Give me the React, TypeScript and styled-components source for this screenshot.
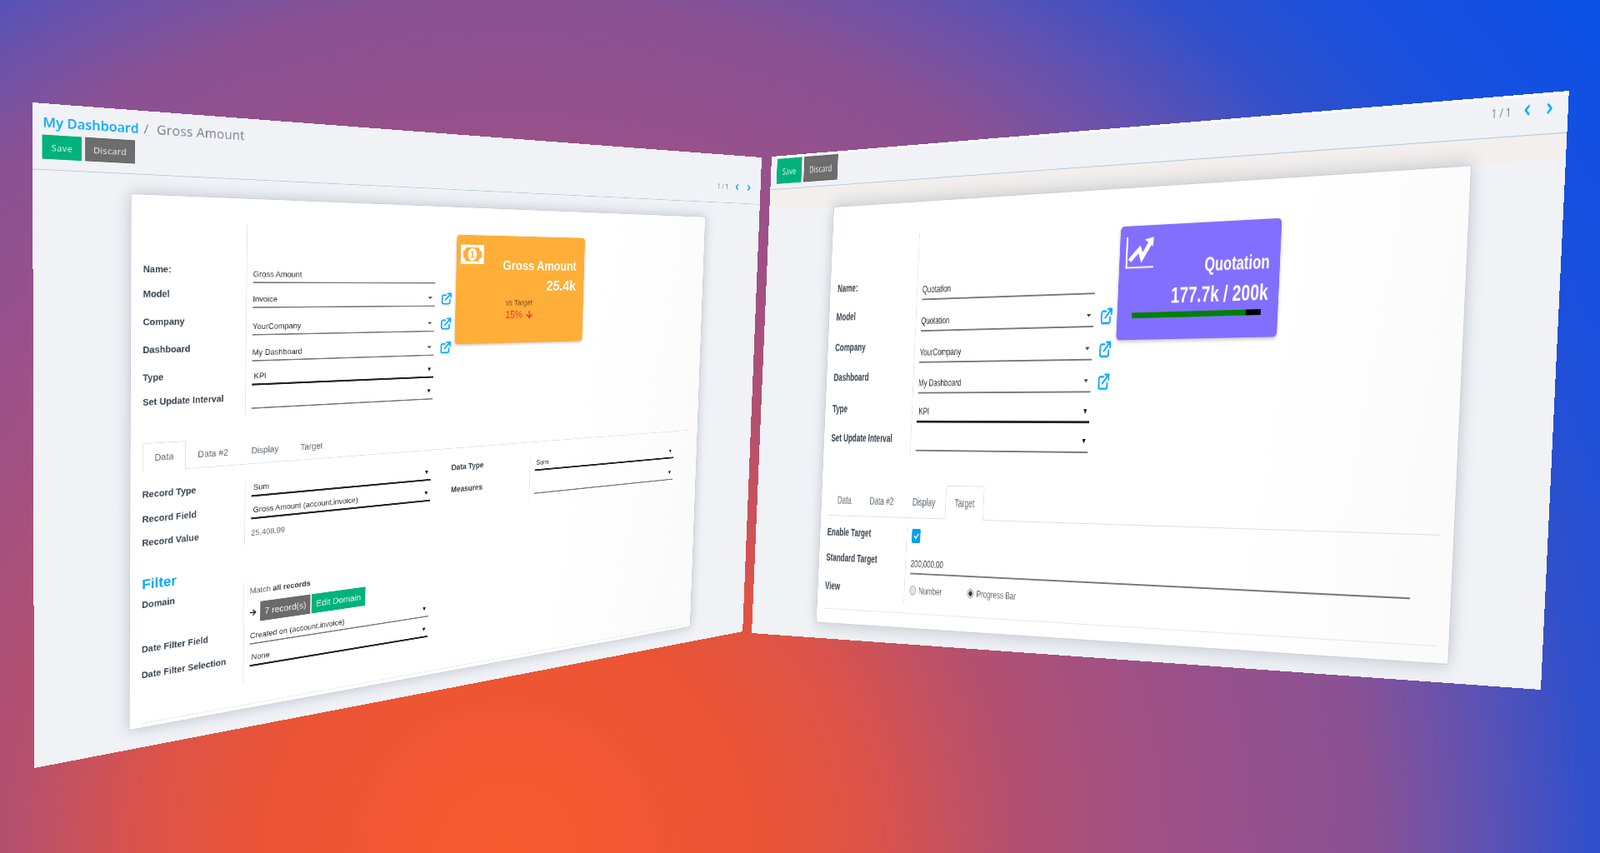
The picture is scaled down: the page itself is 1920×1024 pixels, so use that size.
import React from "react";
import styled, { createGlobalStyle } from "styled-components";
import { ChevronLeft, ChevronRight } from "lucide-react";
import { FaArrowDown, FaArrowRight, FaCheck } from "react-icons/fa";

type Point = [number, number];

// css matrix3d that lands a w x h box on four screen corners (tl, tr, br, bl)
function quadTransform(w: number, h: number, [p0, p1, p2, p3]: Point[]) {
    const dx1 = p1[0] - p2[0], dy1 = p1[1] - p2[1];
    const dx2 = p3[0] - p2[0], dy2 = p3[1] - p2[1];
    const sx = p0[0] - p1[0] + p2[0] - p3[0], sy = p0[1] - p1[1] + p2[1] - p3[1];
    const den = dx1 * dy2 - dy1 * dx2;
    const g = (sx * dy2 - sy * dx2) / den;
    const k = (dx1 * sy - dy1 * sx) / den;
    const a = p1[0] - p0[0] + g * p1[0], b = p3[0] - p0[0] + k * p3[0];
    const d = p1[1] - p0[1] + g * p1[1], e = p3[1] - p0[1] + k * p3[1];
    return `matrix3d(${[a / w, d / w, 0, g / w, b / h, e / h, 0, k / h, 0, 0, 1, 0, p0[0], p0[1], 0, 1].join(",")})`;
}

const GlobalStyle = createGlobalStyle`
    * { box-sizing: border-box; }
    body {
        margin: 0;
        overflow: hidden;
        font-family: "Liberation Sans", Arial, sans-serif;
    }
`;

const Stage = styled.div`
    position: relative;
    width: 1920px;
    height: 1024px;
    overflow: hidden;
    background: radial-gradient(circle 1680px at 610px 1030px,
        #f75a2e 0, #ea5435 300px, #de5348 430px, #b4506f 600px, #a05085 770px,
        #8a5193 1030px, #6652ae 1150px, #2f50cc 1300px, #1a50dc 1430px, #0a50e8 1680px);
`;

const Win = styled.div<{ $w: number; $h: number; $edge?: boolean }>`
    position: absolute;
    left: 0;
    top: 0;
    width: ${p => p.$w}px;
    height: ${p => p.$h}px;
    transform-origin: 0 0;
    overflow: hidden;
    background: #f0f2f6;
    border-top: ${p => p.$edge ? "3px solid #fff" : "0"};
`;

const Header = styled.div`
    border-bottom: 1px solid #b4c7d8;
`;

const Breadcrumb = styled.div`
    display: flex;
    align-items: baseline;
    gap: 7px;
    height: 45px;
    padding: 12px 0 0 14px;
    font: 20px/30px "Open Sans", sans-serif;
    letter-spacing: 0.3px;
    color: #7b7f83;
`;

const Crumb = styled.span`
    font-size: 19.5px;
    letter-spacing: 0;
    color: #00a9ff;
    font-weight: 600;
`;

const CrumbCurrent = styled.span`
    margin-left: 5px;
`;

const ActionBar = styled.div<{ $top: number; $bottom: number; $right: number }>`
    display: flex;
    justify-content: space-between;
    align-items: center;
    padding: ${p => p.$top}px ${p => p.$right}px ${p => p.$bottom}px 13px;
`;

const Actions = styled.div`
    display: flex;
    gap: 5px;
`;

const ActionButton = styled.button<{ $bg: string; $w: number }>`
    width: ${p => p.$w}px;
    height: 35px;
    padding: 0;
    border: 1px solid ${p => p.$bg === "#00b27b" ? "#00b27b" : "#5d5d5d"};
    background: ${p => p.$bg};
    color: #e8f4f0;
    font: 13px "Open Sans", sans-serif;
    letter-spacing: 0.4px;
`;

const Pager = styled.div<{ $lift: number }>`
    display: flex;
    align-items: center;
    gap: 14px;
    margin-top: -${p => p.$lift}px;
    font: 14px "Open Sans", sans-serif;
    color: #777;
    svg { color: #00a9ff; }
`;

const Content = styled.div<{ $band?: boolean }>`
    padding-top: 29px;
    background: ${p => p.$band ? "linear-gradient(#f2efed 0, #f2efed 29px, transparent 29px)" : "none"};
`;

const Sheet = styled.div<{ $x: number; $w: number; $h: number; $top: number; $left: number }>`
    width: ${p => p.$w}px;
    height: ${p => p.$h}px;
    margin-left: ${p => p.$x}px;
    padding: ${p => p.$top}px 20px 0 ${p => p.$left}px;
    background: linear-gradient(100deg, #fff 70%, #fafafa 100%);
    border: 1px solid #cbcdd6;
    box-shadow: 0 0 22px rgba(70, 90, 110, 0.3);
`;

const TopRow = styled.div`
    display: flex;
    align-items: flex-start;
`;

const Group = styled.div``;

const Row = styled.div<{ $h: number }>`
    display: flex;
    height: ${p => p.$h}px;
`;

const Label = styled.div<{ $w: number; $pad: number; $up?: boolean }>`
    flex: none;
    display: flex;
    align-items: ${p => p.$up ? "flex-start" : "flex-end"};
    width: ${p => p.$w}px;
    padding-bottom: ${p => p.$pad}px;
    font-weight: bold;
    font-size: 14px;
    line-height: 20px;
    color: #36424c;
    white-space: nowrap;
`;

const Cell = styled.div<{ $up?: boolean }>`
    flex: none;
    display: flex;
    flex-direction: ${p => p.$up ? "column" : "row"};
    align-items: ${p => p.$up ? "flex-start" : "flex-end"};
    padding-left: 10px;
    border-left: 1px solid #e3e3e3;
`;

const Field = styled.div<{ $w: number; $thick?: boolean; $bare?: boolean }>`
    flex: none;
    display: flex;
    justify-content: space-between;
    align-items: center;
    width: ${p => p.$w}px;
    height: 28px;
    padding-left: ${p => p.$thick ? 3 : 0}px;
    border-bottom: ${p => p.$bare ? "0" : p.$thick ? "3px solid #222" : "2px solid #777"};
    font-size: 13px;
    color: ${p => p.$bare ? "#666" : "#2a2a2a"};
    white-space: nowrap;
`;

const Caret = styled.span<{ $dark?: boolean }>`
    width: 0;
    height: 0;
    margin-right: 5px;
    border-left: ${p => p.$dark ? 3 : 4}px solid transparent;
    border-right: ${p => p.$dark ? 3 : 4}px solid transparent;
    border-top: ${p => p.$dark ? 6 : 4}px solid ${p => p.$dark ? "#111" : "#444"};
`;

const LinkIcon = styled.svg`
    flex: none;
    width: 22px;
    height: 22px;
    margin: 0 0 3px 12px;
    color: #00a9ff;
`;

const Kpi = styled.div<{ $bg: string; $w: number; $h: number; $gap: number; $top: number; $pad: string }>`
    flex: none;
    display: flow-root;
    width: ${p => p.$w}px;
    height: ${p => p.$h}px;
    margin: ${p => p.$top}px 0 0 ${p => p.$gap}px;
    padding: ${p => p.$pad};
    border-radius: 6px;
    background: ${p => p.$bg};
    box-shadow: 0 2px 5px rgba(0, 0, 0, 0.25);
    color: #fff;
`;

const KpiIcon = styled.svg`
    float: left;
`;

const KpiTitle = styled.div<{ $top: number }>`
    margin-top: ${p => p.$top}px;
    text-align: right;
    font-weight: bold;
    font-size: 23px;
    line-height: 26px;
`;

const KpiValue = styled.div<{ $top: number; $size: number }>`
    margin-top: ${p => p.$top}px;
    text-align: right;
    font-weight: bold;
    font-size: ${p => p.$size}px;
    line-height: 30px;
`;

const TargetNote = styled.div`
    margin: 7px 0 0 95px;
    font-size: 14px;
    line-height: 18px;
    color: #8c4f1e;
`;

const TargetDelta = styled.div`
    display: flex;
    align-items: center;
    gap: 6px;
    margin: 1px 0 0 95px;
    font-size: 18px;
    line-height: 24px;
    color: #ff3535;
    svg { font-size: 16px; }
`;

const ProgressTrack = styled.div`
    clear: both;
    width: 220px;
    height: 7px;
    margin: 5px 0 0 16px;
    border-radius: 1px;
    background: #000;
`;

const ProgressFill = styled.div`
    height: 100%;
    background: #008000;
`;

const Tabs = styled.div<{ $top: number }>`
    display: flex;
    gap: 1px;
    height: 45px;
    margin-top: ${p => p.$top}px;
    border-bottom: 1px solid #dedede;
`;

const Tab = styled.div<{ $active?: boolean }>`
    display: flex;
    align-items: center;
    height: 45px;
    padding: 0 17.5px;
    font-size: 14px;
    color: #5c6770;
    background: ${p => p.$active ? "#fff" : "transparent"};
    border: 1px solid ${p => p.$active ? "#dedede" : "transparent"};
    border-bottom: 1px solid ${p => p.$active ? "#fff" : "transparent"};
    border-radius: 3px 3px 0 0;
`;

const Page = styled.div<{ $top: number }>`
    padding-top: ${p => p.$top}px;
`;

const Columns = styled.div`
    display: flex;
`;

const Column = styled.div`
    width: 540px;
    flex: none;
`;

const FilterTitle = styled.div`
    margin: 30px 0 7px;
    font-weight: bold;
    font-size: 22px;
    line-height: 30px;
    color: #00a9ff;
`;

const MatchLine = styled.div`
    margin-top: 2px;
    font-size: 13px;
    line-height: 18px;
    color: #5c6770;
    b { color: #333; }
`;

const DomainBar = styled.div`
    display: flex;
    align-items: center;
    gap: 2px;
    margin-top: 10px;
    svg { font-size: 12px; color: #222; margin-right: 4px; }
`;

const DomainButton = styled.div<{ $bg: string; $w: number }>`
    display: flex;
    align-items: center;
    justify-content: center;
    width: ${p => p.$w}px;
    height: 33px;
    background: ${p => p.$bg};
    font-size: 15px;
    color: #eef6f3;
`;

const PageEnd = styled.div<{ $top: number }>`
    margin-top: ${p => p.$top}px;
    border-top: 1px solid #e6e6e6;
`;

const Check = styled.span`
    display: flex;
    align-items: center;
    justify-content: center;
    width: 17px;
    height: 19px;
    margin-bottom: 5px;
    border-radius: 2px;
    background: #00a0f0;
    color: #fff;
    font-size: 10px;
`;

const RadioLine = styled.div`
    display: flex;
    align-items: center;
    height: 37px;
    font-size: 13px;
    color: #666;
`;

const Radio = styled.span<{ $on?: boolean }>`
    flex: none;
    width: 13px;
    height: 13px;
    margin-right: 5px;
    border-radius: 50%;
    border: 1px solid #999;
    background: ${p => p.$on ? "radial-gradient(circle, #333 0, #333 3px, #ddd 3.5px)" : "#e4e4e4"};
`;

const RadioText = styled.span<{ $w?: number }>`
    width: ${p => p.$w ? `${p.$w}px` : "auto"};
`;

function ExternalLink() {
    return (
        <LinkIcon viewBox="0 0 24 24" fill="none" stroke="currentColor" strokeWidth="2.8" strokeLinecap="round">
            <path d="M11 5.5H5.5a3 3 0 0 0-3 3V19a3 3 0 0 0 3 3H16a3 3 0 0 0 3-3v-5" />
            <path d="M9.5 14.5 21 3" />
            <path d="M14.5 2.5h7v7" />
        </LinkIcon>
    );
}

function MoneyIcon() {
    return (
        <KpiIcon width="47" height="34" viewBox="0 0 47 34">
            <rect width="47" height="34" fill="#fff" />
            <path d="M10 5H37C37 9 39 11 42 11V23C39 23 37 25 37 29H10C10 25 8 23 5 23V11C8 11 10 9 10 5Z" fill="#ffae38" />
            <ellipse cx="23.5" cy="17" rx="9" ry="11" fill="#fff" />
            <text x="23.5" y="23" textAnchor="middle" fontSize="17" fontWeight="bold" fill="#ffae38">1</text>
        </KpiIcon>
    );
}

function ChartIcon() {
    return (
        <KpiIcon width="50" height="40" viewBox="0 0 102 115" preserveAspectRatio="none">
            <path d="M5 0V110H102" fill="none" stroke="#fff" strokeWidth="6" />
            <path d="M16 85 50 45 60 75 88 24" fill="none" stroke="#fff" strokeWidth="15" />
            <path d="M68 10 100 3 98 36Z" fill="#fff" />
        </KpiIcon>
    );
}

type RowInfo = {
    label?: string;
    value?: string;
    h: number;
    pad?: number;
    thick?: boolean;
    select?: boolean;
    link?: boolean;
    bare?: boolean;
};

function FormRows({ rows, labelW, fieldW }: { rows: RowInfo[]; labelW: number; fieldW: number }) {
    return (
        <>
            {rows.map((row, i) => (
                <Row key={i} $h={row.h}>
                    <Label $w={labelW} $pad={row.pad ?? 8}>{row.label}</Label>
                    <Cell>
                        {row.value !== undefined && (
                            <Field $w={fieldW} $thick={row.thick} $bare={row.bare}>
                                <span>{row.value}</span>
                                {row.select && <Caret $dark={row.thick || !row.link} />}
                            </Field>
                        )}
                        {row.link && <ExternalLink />}
                    </Cell>
                </Row>
            ))}
        </>
    );
}

const grossTop: RowInfo[] = [
    { label: "Name:", value: "Gross Amount", h: 93, pad: 11 },
    { label: "Model", value: "Invoice", h: 40, pad: 13, select: true, link: true },
    { label: "Company", value: "YourCompany", h: 44, pad: 14, select: true, link: true },
    { label: "Dashboard", value: "My Dashboard", h: 42, pad: 13, select: true, link: true },
    { label: "Type", value: "KPI", h: 39, pad: 9, thick: true, select: true },
    { label: "Set Update Interval", value: "", h: 38, pad: 9, select: true },
    { h: 9 },
];

const quotationTop: RowInfo[] = [
    { label: "Name:", value: "Quotation", h: 89, pad: 10 },
    { label: "Model", value: "Quotation", h: 42, pad: 13, select: true, link: true },
    { label: "Company", value: "YourCompany", h: 42, pad: 13, select: true, link: true },
    { label: "Dashboard", value: "My Dashboard", h: 41, pad: 13, select: true, link: true },
    { label: "Type", value: "KPI", h: 39, pad: 9, thick: true, select: true },
    { label: "Set Update Interval", value: "", h: 38, pad: 7, select: true },
    { h: 8 },
];

const recordRows: RowInfo[] = [
    { label: "Record Type", value: "Sum", h: 29, pad: 9.5, thick: true, select: true },
    { label: "Record Field", value: "Gross Amount (account.invoice)", h: 37, pad: 7.5, thick: true, select: true },
    { label: "Record Value", value: "25,408.99", h: 36, pad: 6, bare: true },
    { h: 5 },
];

const dataTypeRows: RowInfo[] = [
    { label: "Data Type", value: "Sum", h: 29, pad: 10, thick: true, select: true },
    { label: "Measures", value: "", h: 43, pad: 13, select: true },
    { h: 13 },
];

const dateRows: RowInfo[] = [
    { label: "Date Filter Field", value: "Created on (account.invoice)", h: 33, pad: 9, select: true },
    { label: "Date Filter Selection", value: "None", h: 37, pad: 5, thick: true, select: true },
    { h: 28 },
];

function GrossWindow() {
    return (
        <Win $w={1400} $h={990} style={{ transform: quadTransform(1400, 990, [[39, 123], [914, 189], [891, 758], [41, 922]]) }}>
            <Header>
                <Breadcrumb>
                    <Crumb>My Dashboard</Crumb>
                    <span>/</span>
                    <CrumbCurrent>Gross Amount</CrumbCurrent>
                </Breadcrumb>
                <ActionBar $top={0} $bottom={15} $right={22}>
                    <Actions>
                        <ActionButton $bg="#00b27b" $w={55}>Save</ActionButton>
                        <ActionButton $bg="#6d6d6d" $w={72}>Discard</ActionButton>
                    </Actions>
                    <Pager $lift={0}>
                        <span>1 / 1</span>
                        <ChevronLeft size={18} strokeWidth={3.5} />
                        <ChevronRight size={18} strokeWidth={3.5} />
                    </Pager>
                </ActionBar>
            </Header>
            <Content>
                <Sheet $x={139} $w={1119} $h={834} $top={41} $left={18}>
                    <TopRow>
                        <Group>
                            <FormRows rows={grossTop} labelW={162} fieldW={327} />
                        </Group>
                        <Kpi $bg="#ffae38" $w={271} $h={193} $gap={6.5} $top={7} $pad="17px 17px 0 8px">
                            <MoneyIcon />
                            <KpiTitle $top={23}>Gross Amount</KpiTitle>
                            <KpiValue $top={8} $size={26}>25.4k</KpiValue>
                            <TargetNote>vs Target</TargetNote>
                            <TargetDelta>15% <FaArrowDown /></TargetDelta>
                        </Kpi>
                    </TopRow>
                    <Tabs $top={36}>
                        <Tab $active>Data</Tab>
                        <Tab>Data #2</Tab>
                        <Tab>Display</Tab>
                        <Tab>Target</Tab>
                    </Tabs>
                    <Page $top={25}>
                        <Columns>
                            <Column>
                                <FormRows rows={recordRows} labelW={163} fieldW={325} />
                            </Column>
                            <Column>
                                <FormRows rows={dataTypeRows} labelW={164} fieldW={325} />
                            </Column>
                        </Columns>
                        <FilterTitle>Filter</FilterTitle>
                        <Row $h={67}>
                            <Label $w={162} $pad={0} $up>Domain</Label>
                            <Cell $up>
                                <MatchLine>Match <b>all records</b></MatchLine>
                                <DomainBar>
                                    <FaArrowRight />
                                    <DomainButton $bg="#6b6b6b" $w={87}>7 record(s)</DomainButton>
                                    <DomainButton $bg="#00b27b" $w={98}>Edit Domain</DomainButton>
                                </DomainBar>
                            </Cell>
                        </Row>
                        <FormRows rows={dateRows} labelW={163} fieldW={326} />
                        <PageEnd $top={34} />
                    </Page>
                </Sheet>
            </Content>
        </Win>
    );
}

function QuotationWindow() {
    return (
        <Win $w={1400} $h={670} $edge style={{ transform: quadTransform(1400, 670, [[926, 188], [1883, 109], [1849, 828], [902, 760]]) }}>
            <Header>
                <ActionBar $top={1} $bottom={7} $right={17}>
                    <Actions>
                        <ActionButton $bg="#00b27b" $w={54}>Save</ActionButton>
                        <ActionButton $bg="#6d6d6d" $w={72}>Discard</ActionButton>
                    </Actions>
                    <Pager $lift={7}>
                        <span>1 / 1</span>
                        <ChevronLeft size={18} strokeWidth={3.5} />
                        <ChevronRight size={18} strokeWidth={3.5} />
                    </Pager>
                </ActionBar>
            </Header>
            <Content $band>
                <Sheet $x={139} $w={1126} $h={573} $top={43} $left={15}>
                    <TopRow>
                        <Group>
                            <FormRows rows={quotationTop} labelW={164} fieldW={329} />
                        </Group>
                        <Kpi $bg="#836fff" $w={274} $h={143} $gap={8} $top={5} $pad="14px 17px 0 10px">
                            <ChartIcon />
                            <KpiTitle $top={25}>Quotation</KpiTitle>
                            <KpiValue $top={9} $size={26.8}>177.7k / 200k</KpiValue>
                            <ProgressTrack>
                                <ProgressFill style={{ width: `${(177.7 / 200) * 100}%` }} />
                            </ProgressTrack>
                        </Kpi>
                    </TopRow>
                    <Tabs $top={37}>
                        <Tab>Data</Tab>
                        <Tab>Data #2</Tab>
                        <Tab>Display</Tab>
                        <Tab $active>Target</Tab>
                    </Tabs>
                    <Page $top={12}>
                        <Row $h={26}>
                            <Label $w={164} $pad={6.5}>Enable Target</Label>
                            <Cell><Check><FaCheck /></Check></Cell>
                        </Row>
                        <Row $h={37}>
                            <Label $w={164} $pad={8.5}>Standard Target</Label>
                            <Cell><Field $w={873}>200,000.00</Field></Cell>
                        </Row>
                        <Row $h={40}>
                            <Label $w={164} $pad={9}>View</Label>
                            <Cell>
                                <RadioLine>
                                    <Radio />
                                    <RadioText $w={96}>Number</RadioText>
                                    <Radio $on />
                                    <RadioText>Progress Bar</RadioText>
                                </RadioLine>
                            </Cell>
                        </Row>
                        <PageEnd $top={12} />
                    </Page>
                </Sheet>
            </Content>
        </Win>
    );
}

export default function App() {
    return (
        <>
            <GlobalStyle />
            <Stage>
                <GrossWindow />
                <QuotationWindow />
            </Stage>
        </>
    );
}
